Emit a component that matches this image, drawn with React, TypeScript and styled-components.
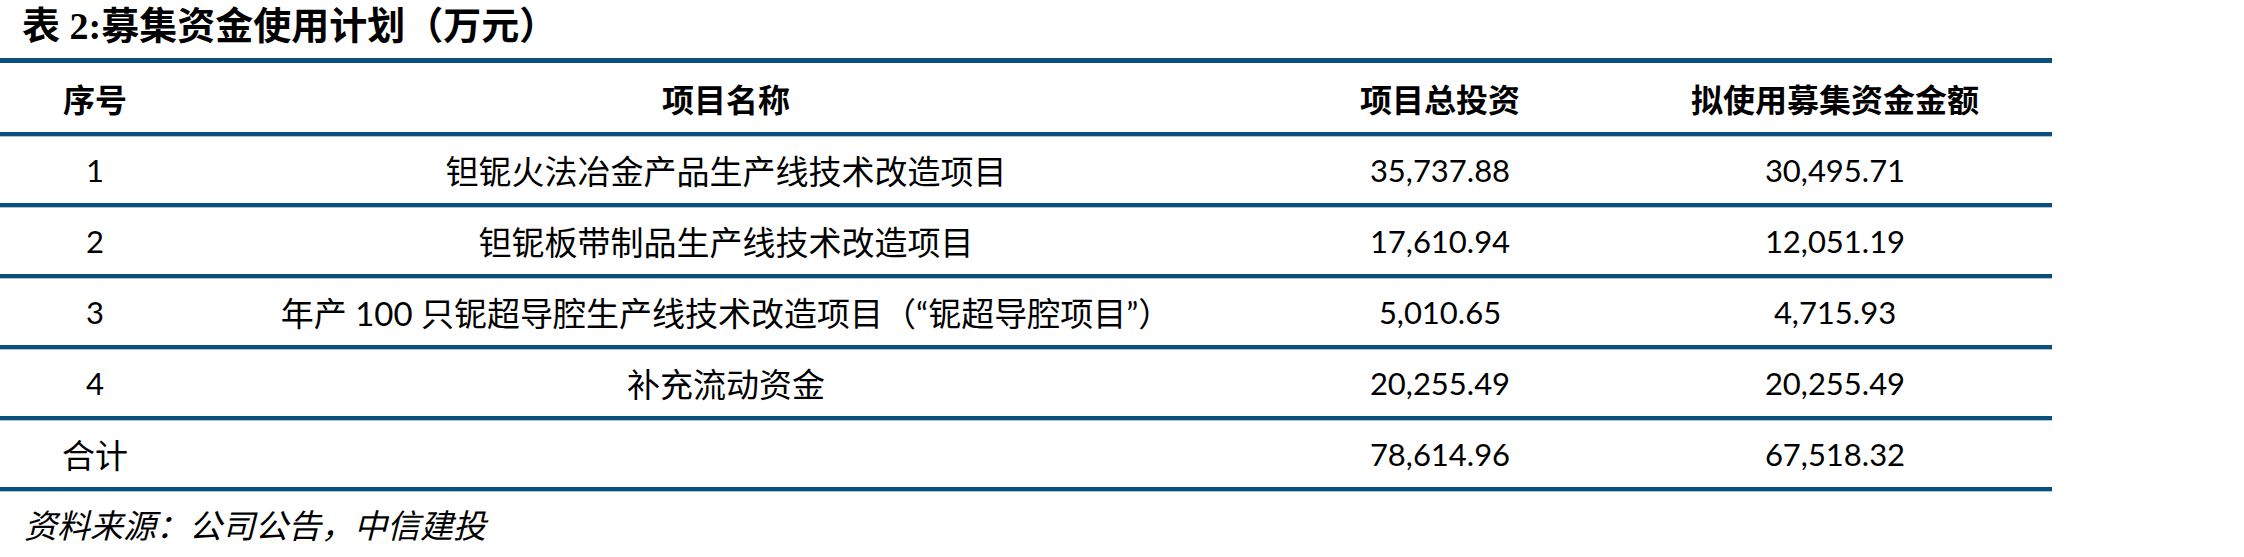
import React from "react";
import styled, { createGlobalStyle } from "styled-components";

const GlobalStyle = createGlobalStyle`
  html, body {
    margin: 0;
    padding: 0;
    background: #ffffff;
  }
  body {
    font-family: Lato, "Noto Sans CJK SC", sans-serif;
    color: #000000;
  }
`;

type Row = {
  no: string;
  name: string;
  total: string;
  raised: string;
};

const rows: Row[] = [
  { no: "1", name: "钽铌火法冶金产品生产线技术改造项目", total: "35,737.88", raised: "30,495.71" },
  { no: "2", name: "钽铌板带制品生产线技术改造项目", total: "17,610.94", raised: "12,051.19" },
  { no: "3", name: "年产 100 只铌超导腔生产线技术改造项目（“铌超导腔项目”）", total: "5,010.65", raised: "4,715.93" },
  { no: "4", name: "补充流动资金", total: "20,255.49", raised: "20,255.49" },
  { no: "合计", name: "", total: "78,614.96", raised: "67,518.32" },
];

function App(): JSX.Element {
  return (
    <Page>
      <GlobalStyle />
      <Title>表 2:募集资金使用计划（万元）</Title>
      <Table>
        <HeaderRow>
          <HeadCell>序号</HeadCell>
          <HeadCell>项目名称</HeadCell>
          <HeadCell>项目总投资</HeadCell>
          <HeadCell>拟使用募集资金金额</HeadCell>
        </HeaderRow>
        {rows.map((r) => (
          <BodyRow key={r.no}>
            <Cell $cjk={r.no === "合计"}>{r.no}</Cell>
            <Cell $cjk>{r.name}</Cell>
            <Cell>{r.total}</Cell>
            <Cell>{r.raised}</Cell>
          </BodyRow>
        ))}
      </Table>
      <Source>资料来源：公司公告，中信建投</Source>
    </Page>
  );
}

const Page = styled.div`
  width: 2244px;
  height: 557px;
  overflow: hidden;
  background: #ffffff;
`;

const Title = styled.div`
  height: 58px;
  line-height: 52px;
  padding-left: 22px;
  font-family: "Liberation Serif", "Noto Sans CJK SC", serif;
  font-weight: 700;
  font-size: 38px;
  white-space: nowrap;
`;

const Table = styled.div`
  width: 2052px;
  border-top: 5px solid #0b4f7e;
`;

const Line = styled.div`
  display: grid;
  grid-template-columns: 190px 1072px 356px 434px;
  align-items: center;
  border-bottom: 4px solid #0b4f7e;
  box-shadow: 0 1px 0 #a9c3d8;
`;

const HeaderRow = styled(Line)`
  height: 69px;
`;

const BodyRow = styled(Line)`
  height: 67px;
`;

const HeadCell = styled.div`
  text-align: center;
  font-family: "Noto Sans CJK SC", sans-serif;
  font-weight: 700;
  font-size: 32px;
  white-space: nowrap;
`;

const Cell = styled.div<{ $cjk?: boolean }>`
  text-align: center;
  font-family: Lato, "Noto Sans CJK SC", sans-serif;
  font-weight: 400;
  font-size: ${(p) => (p.$cjk ? "33px" : "31px")};
  white-space: nowrap;
`;

const Source = styled.div`
  margin-top: 8px;
  padding-left: 24px;
  line-height: 50px;
  font-family: "Noto Sans CJK SC", sans-serif;
  font-style: italic;
  font-size: 33px;
  white-space: nowrap;
`;

export default App;
